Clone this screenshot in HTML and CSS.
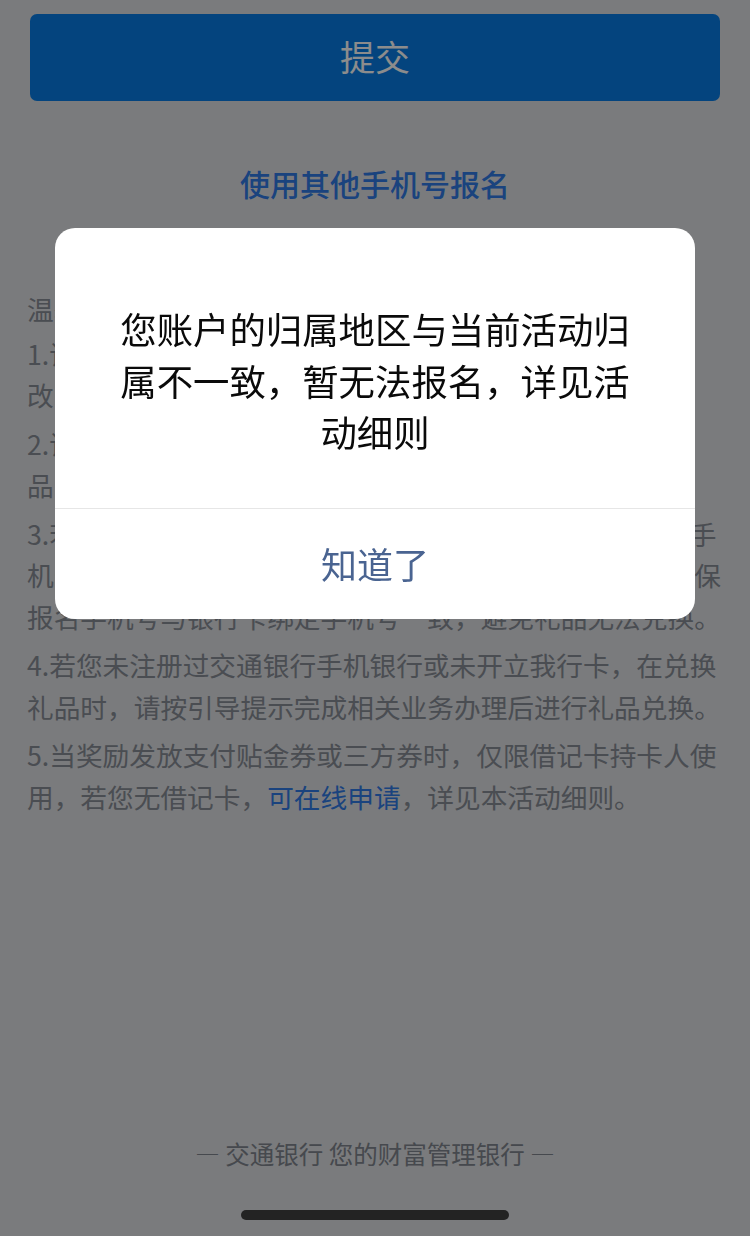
FILE: index.html
```html
<!DOCTYPE html>
<html lang="zh-CN">
<head>
<meta charset="utf-8">
<title>报名</title>
<link rel="stylesheet" href="styles.css">
</head>
<body>
<div class="page">
  <div class="submit">提交</div>
  <div class="alt-link">使用其他手机号报名</div>
  <div class="tips">
    <div class="tips-title">温馨提示</div>
    <div class="tips-item">1.请使用本人手机号报名，每人限报一次，报名后不可修改，如有疑问请咨询客服。</div>
    <div class="tips-item">2.请在活动期内完成指定任务，报名成功后可领取对应礼品，礼品数量有限，先到先得。</div>
    <div class="tips-item">3.若您报名时使用的手机号并非交通银行手机银行的注册手机号，请于兑换礼品前登录手机银行完成相关设置，并确保报名手机号与银行卡绑定手机号一致，避免礼品无法兑换。</div>
    <div class="tips-item">4.若您未注册过交通银行手机银行或未开立我行卡，在兑换礼品时，请按引导提示完成相关业务办理后进行礼品兑换。</div>
    <div class="tips-item">5.当奖励发放支付贴金券或三方券时，仅限借记卡持卡人使用，若您无借记卡，<span class="tips-link">可在线申请</span>，详见本活动细则。</div>
  </div>
  <div class="footer">— 交通银行 您的财富管理银行 —</div>
</div>
<div class="mask"></div>
<div class="modal">
  <div class="modal-msg">您账户的归属地区与当前活动归属不一致，暂无法报名，详见活动细则</div>
  <div class="modal-btn">知道了</div>
</div>
<div class="home-indicator"></div>
</body>
</html>
```
FILE: styles.css
```css
html, body {
  margin: 0;
  padding: 0;
}
body {
  font-family: "Noto Sans CJK SC", "Noto Sans", sans-serif;
}
.page {
  min-height: 1236px;
  box-sizing: border-box;
  background: #dee0e3;
  display: flex;
  flex-direction: column;
  padding-top: 14px;
}
.submit {
  margin: 0 30px;
  height: 87px;
  box-sizing: border-box;
  padding-bottom: 5px;
  background: #097de5;
  border-radius: 7px;
  color: #ffffff;
  font-size: 35px;
  display: flex;
  align-items: center;
  justify-content: center;
}
.alt-link {
  margin-top: 60px;
  text-align: center;
  font-size: 30px;
  line-height: 44px;
  font-weight: 500;
  color: #317ae5;
}
.tips {
  margin-top: 83px;
  padding: 0 27px;
  font-size: 26.7px;
  line-height: 41.2px;
  color: #878c95;
}
.tips-title {
  margin-bottom: 4px;
}
.tips-item + .tips-item {
  margin-top: 7.6px;
}
.tips-link {
  color: #317ae5;
}
.footer {
  margin-top: auto;
  padding-bottom: 65px;
  text-align: center;
  font-size: 24.5px;
  line-height: 34px;
  color: #80858e;
}
.mask {
  position: fixed;
  inset: 0;
  background: rgba(0, 0, 0, 0.45);
}
.modal {
  position: fixed;
  top: 228px;
  left: 55px;
  width: 640px;
  background: #ffffff;
  border-radius: 20px;
  overflow: hidden;
}
.modal-msg {
  padding: 75px 60px 50px;
  font-size: 36.4px;
  line-height: 51.5px;
  text-align: center;
  color: #0a0a0a;
}
.modal-btn {
  border-top: 1px solid #e6e6e6;
  height: 111px;
  box-sizing: border-box;
  padding-bottom: 2px;
  display: flex;
  align-items: center;
  justify-content: center;
  font-size: 36px;
  color: #4a6491;
}
.home-indicator {
  position: fixed;
  left: 241px;
  bottom: 16px;
  width: 268px;
  height: 10px;
  border-radius: 5px;
  background: #232323;
}
```
